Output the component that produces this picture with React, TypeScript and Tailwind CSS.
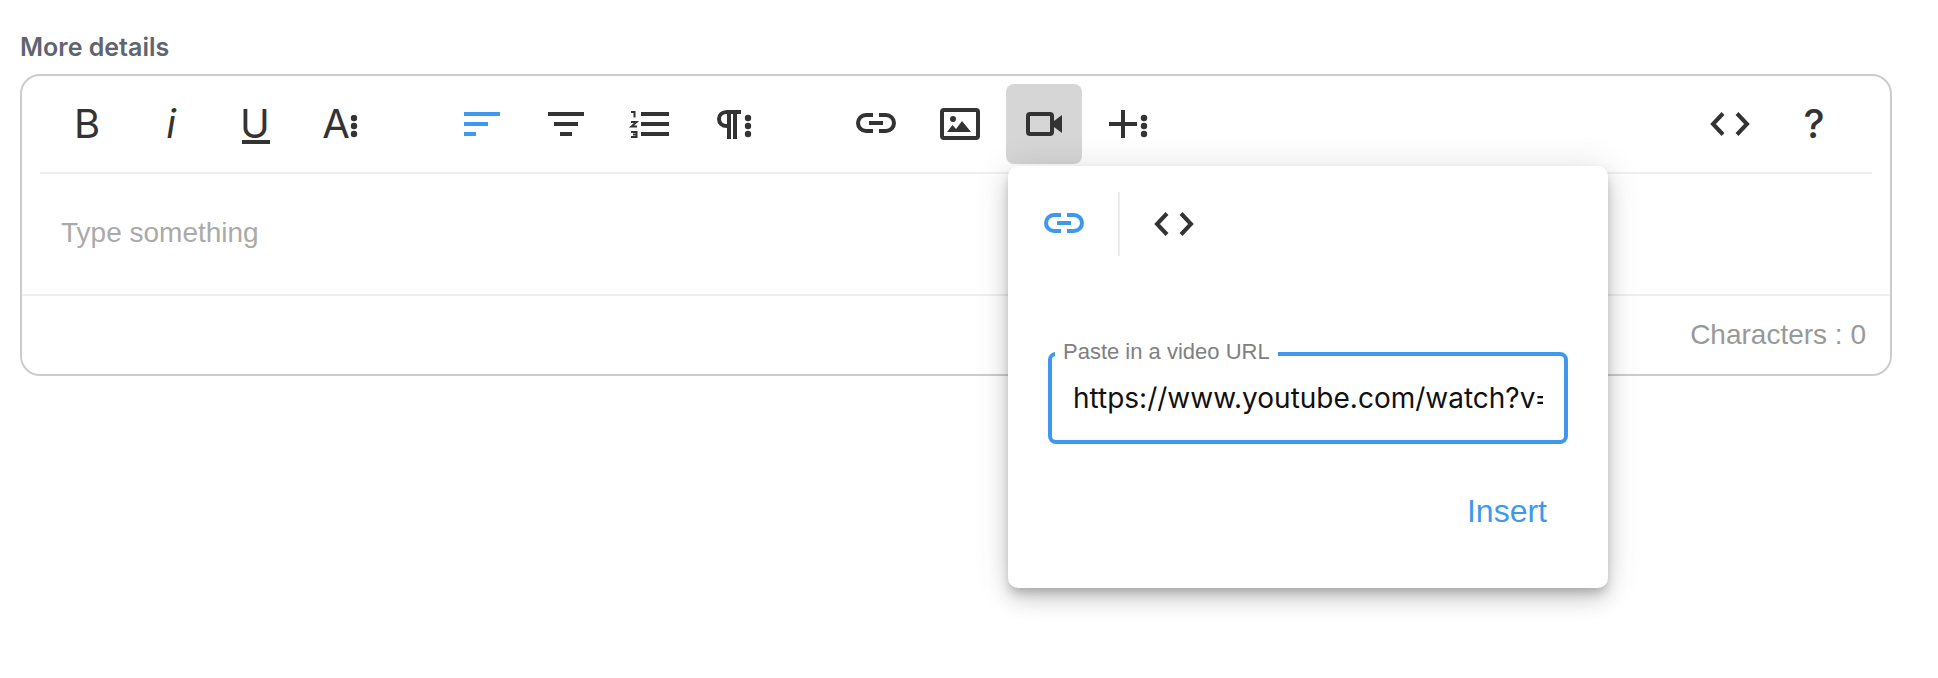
import React from "react";

const dark = "#333333";
const blue = "#3f98f0";

function Btn({ children, active = false, className = "" }: { children?: React.ReactNode; active?: boolean; className?: string }) {
  return (
    <div className={`relative w-[76px] h-[80px] shrink-0 flex items-center justify-center rounded-lg text-[#333333] ${active ? "bg-[#d6d6d6]" : ""} ${className}`}>
      {children}
    </div>
  );
}

function Svg({ children }: { children: React.ReactNode }) {
  return (
    <svg width="76" height="80" viewBox="0 0 76 80" className="block" fill="none">
      {children}
    </svg>
  );
}

function Dots({ x, ys }: { x: number; ys: number[] }) {
  return (
    <>
      {ys.map((y) => (
        <circle key={y} cx={x} cy={y} r="3.2" fill={dark} />
      ))}
    </>
  );
}

function LinkIcon({ color }: { color: string }) {
  return (
    <Svg>
      <path d="M35 31H28a8 8 0 0 0 0 16H35M41 31H48a8 8 0 0 1 0 16H41M31 39H45" stroke={color} strokeWidth="4" />
    </Svg>
  );
}

function CodeIcon() {
  return (
    <Svg>
      <path d="M31 29.5L21 40L31 50.5M45 29.5L55 40L45 50.5" stroke={dark} strokeWidth="4" />
    </Svg>
  );
}

const glyph = "font-['Inter',sans-serif] text-[40px] leading-none";

export default function App() {
  return (
    <div className="bg-white w-[1938px] h-[678px] overflow-hidden pt-[32px] pl-[20px] font-['Liberation_Sans',Arial,sans-serif]">
      <div className="font-['Inter',sans-serif] font-semibold text-[25px] leading-[30px] text-[#5f6472] h-[42px]">More details</div>

      <div className="relative w-[1872px] h-[302px] border-2 border-[#cccccc] rounded-[20px] flex flex-col">
        <div className="mx-[18px] border-b-2 border-[#efefef] h-[98px] flex items-center pl-[9px] pr-[20px]">
          <div className="flex gap-[8px]">
            <Btn><span className={glyph}>B</span></Btn>
            <Btn><span className={`${glyph} italic`}>i</span></Btn>
            <Btn>
              <span className={glyph}>U</span>
              <span className="absolute left-[25px] top-[56px] w-[28px] h-[4px] bg-[#333333]" />
            </Btn>
            <Btn>
              <span className={`${glyph} mr-[6px]`}>A</span>
              <svg width="8" height="26" viewBox="0 0 8 26" className="absolute left-[49px] top-[31px]">
                <circle cx="4" cy="3" r="3.2" fill={dark} />
                <circle cx="4" cy="11" r="3.2" fill={dark} />
                <circle cx="4" cy="19" r="3.2" fill={dark} />
              </svg>
            </Btn>
          </div>

          <div className="flex gap-[8px] ml-[67px]">
            <Btn>
              <Svg>
                <path d="M20 28H56V32H20ZM20 38H44V42H20ZM20 48H32V52H20Z" fill={blue} />
              </Svg>
            </Btn>
            <Btn>
              <Svg>
                <path d="M20 28H56V32H20ZM26 38H50V42H26ZM32 48H44V52H32Z" fill={dark} />
              </Svg>
            </Btn>
            <Btn>
              <Svg>
                <path d="M29 28H57V32H29ZM29 38H57V42H29ZM29 48H57V52H29Z" fill={dark} />
                <path d="M19 28H22.5V33.5M19 38H24.5L19.5 42.5H25M19 48H24.5V50.5H21M24.5 50.5V53H19" stroke={dark} strokeWidth="2" />
              </Svg>
            </Btn>
            <Btn>
              <Svg>
                <path d="M33 28V55M39 28V55" stroke={dark} strokeWidth="4" />
                <path d="M45 28H31C26 28 23 31 23 35C23 39 26 42 31 42" stroke={dark} strokeWidth="4" />
                <Dots x={52} ys={[34, 42, 50]} />
              </Svg>
            </Btn>
          </div>

          <div className="flex gap-[8px] ml-[66px]">
            <Btn><LinkIcon color={dark} /></Btn>
            <Btn>
              <Svg>
                <rect x="20" y="26" width="36" height="28" rx="2" stroke={dark} strokeWidth="4" />
                <circle cx="31" cy="35" r="3" fill={dark} />
                <path d="M25 48L30.5 41L34 45L40 37L49 48Z" fill={dark} />
              </Svg>
            </Btn>
            <Btn active>
              <Svg>
                <rect x="22" y="30" width="24" height="20" rx="2" stroke={dark} strokeWidth="4" />
                <path d="M48 37L56 31V49L48 43Z" fill={dark} />
              </Svg>
            </Btn>
            <Btn>
              <Svg>
                <path d="M19 40H47M33 26V54" stroke={dark} strokeWidth="4" />
                <Dots x={54} ys={[34, 42, 50]} />
              </Svg>
            </Btn>
          </div>

          <div className="flex gap-[8px] ml-auto">
            <Btn><CodeIcon /></Btn>
            <Btn><span className={`${glyph} font-medium`}>?</span></Btn>
          </div>
        </div>

        <div className="h-[120px] pl-[39px] pt-[43px] text-[28px] leading-[32px] text-[#aaaaaa]">Type something</div>

        <div className="border-t-2 border-[#efefef] flex-1 flex items-center justify-end pr-[24px] text-[28px] text-[#999999]">Characters : 0</div>

        <div className="absolute left-[986px] top-[90px] w-[600px] h-[422px] bg-white rounded-[10px] shadow-[0_6px_10px_-2px_rgba(0,0,0,0.2),0_12px_20px_0_rgba(0,0,0,0.14),0_2px_36px_0_rgba(0,0,0,0.12)] flex flex-col">
          <div className="flex items-center pt-[26px] pl-[18px] h-[90px]">
            <div className="h-[64px] flex items-center"><LinkIcon color={blue} /></div>
            <div className="w-[2px] h-[64px] bg-[#ebebeb] mx-[16px]" />
            <div className="h-[64px] flex items-center"><CodeIcon /></div>
          </div>

          <div className="relative mx-[40px] mt-[96px]">
            <input
              readOnly
              value="https://www.youtube.com/watch?v="
              className="block w-[520px] h-[92px] border-[4px] border-[#3f98f0] rounded-[8px] px-[21px] text-[28px] text-[#111111] font-['Inter',sans-serif] outline-none"
            />
            <span className="absolute left-[7px] top-[-12px] bg-white px-[8px] text-[22px] leading-[24px] text-[#808080]">Paste in a video URL</span>
          </div>

          <div className="flex justify-end pr-[61px] mt-[48px] text-[32px] leading-[38px] text-[#3f98f0]">Insert</div>
        </div>
      </div>
    </div>
  );
}
